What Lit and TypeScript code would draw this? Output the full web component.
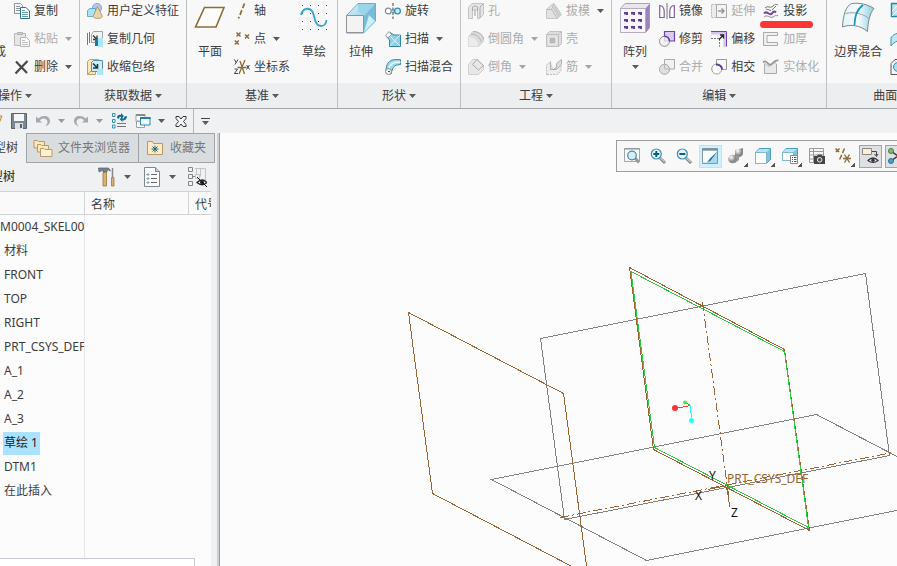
import { LitElement, html, svg, css, nothing, TemplateResult, SVGTemplateResult } from "lit";
import { customElement, property } from "lit/decorators.js";
import { classMap } from "lit/directives/class-map.js";

/* Small glyphs are drawn on a 16 x 16 grid. */
const glyphs: Record<string, SVGTemplateResult> = {
  copy: svg`<path d="M.5 .5h6l2 2v8h-8z" fill="#f4f4f4" stroke="#8d9499"/><path d="M2 3.5h4M2 5.5h4M2 7.5h4" stroke="#8d9499"/><path d="M6.500 4.500h5.500l3.500 3.500v7.500h-9z" fill="#fff" stroke="#2d7490"/><path d="M8 7.500h3M8 9.500h6M8 11.500h6M8 13.500h6" stroke="#6ba0b6"/>`,
  paste: svg`<path d="M.5 2.500h11v12h-11z" fill="#e6e6e6" stroke="#bbb"/><path d="M3.500 3.500v-2h5v2z" fill="#d5d5d5" stroke="#b0b0b0"/><path d="M6.500 6.500h6l3 3v6h-9z" fill="#fafafa" stroke="#b5b5b5"/><path d="M8 9.500h3M8 11.500h6M8 13.500h6" stroke="#bdbdbd"/>`,
  remove: svg`<path d="M2 2.500 13 14M13.500 2 1.500 14.500" fill="none" stroke="#484848" stroke-width="2.200"/>`,
  udf: svg`<circle cx="10" cy="5" r="4.600" fill="#b9c5ee" stroke="#7d8ab4" stroke-width=".7"/><path d="M.5 7.500 2.500 5.500h6v6l-2 2h-6z" fill="#a5e3f5" stroke="#4c9dbd" stroke-width=".8"/><path d="M10.500 3.500 6 13.500c1 2.500 8 2.500 9.500 0z" fill="#e9d5ad" stroke="#a98c57" stroke-width=".8"/>`,
  copygeom: svg`<path d="M.5 2v12M2.500 1v11" stroke="#777"/><path d="M4.500 3.500 6.500.500h9v7l-3 4h-8z" fill="#f0f2f3" stroke="#9ca2a5"/><path d="M6 4.500 9.500 8M10 4.500v4h-4" stroke="#333" stroke-width="1.300" fill="none"/><path d="M11 7h5v9h-5z" fill="#a9e8fb"/><path d="M8 8h3v7h-3z" fill="#177aa1"/>`,
  shrink: svg`<path d="M.5 15.500v-13l2-2h9v4M.5 15.500h8v-4h-4z" fill="#f7e7bb" stroke="#bda263"/><path d="M4.500 3.500 6.500 1.500h9v8l-3 3h-8z" fill="#d6ecf4" stroke="#4e93ad"/><path d="M6 4.500 10 8.500M10.500 5v4h-4.500" stroke="#153d4d" stroke-width="1.600" fill="none"/><path d="M10 10h6v6h-6z" fill="#a9e8fb"/>`,
  axis: svg`<path d="M10.500.500 4.500 15.500" stroke="#8b6c35" stroke-width="1.700" stroke-dasharray="5 2.200"/>`,
  point: svg`<path d="M2.500 1.500l4 4m0-4l-4 4M11 3.500l4 4m0-4l-4 4M.8 9.500l4 4m0-4l-4 4" stroke="#8b6c35" stroke-width="1.500" fill="none"/>`,
  csys: svg`<path d="M3.500 8.500h9M5 15l6-14M6 2l4.500 13" stroke="#8b6c35" stroke-width="1.300"/><path d="M.5.500l1.500 3M4 .5l-3 5M.5 10h3l-3 4.500h3.500M12.500 6l3 4.500m0-4.500l-3 4.500" stroke="#444" fill="none"/>`,
  revolve: svg`<path d="M5 5.500c2 1 4 1 6 0v5c-2-1-4-1-6 0z" fill="#9fdcf0"/><circle cx="3.300" cy="8" r="2.900" fill="#fff" stroke="#8a8a8a" stroke-width="1.200"/><circle cx="12.500" cy="8" r="2.900" fill="#c8eaf5" stroke="#318eb2" stroke-width="1.300"/><path d="M8 0v16" stroke="#444" stroke-dasharray="3 1.500"/>`,
  sweep: svg`<path d="M5 1.500 9 4h6.500v11.500h-11L4.500 9 1 5z" fill="#8ed0e7" stroke="#3587a6"/><path d="M5 5l5 5 5 5M15 4 5 15" fill="none" stroke="#d9f2fa"/><path d="M.7 4.500 4 .5l2.500 3L3 7z" fill="#f8f8f8" stroke="#888" stroke-width=".8"/>`,
  blend: svg`<path d="M1 12C1 5 4 1 9.500.600h6v5L12 6c-3 .5-4.500 3-6 9z" fill="#9ed9ee" stroke="#3d88a4"/><path d="M3.500 11c1-5 3-8 12-8" stroke="#e9f8fd" stroke-width="1.600" fill="none"/><circle cx="3.500" cy="12.500" r="3" fill="#f5f5f5" stroke="#888"/><path d="M3 12.500h2" stroke="#555"/>`,
  hole: svg`<path d="M.5 4.500 4 .500h11.500v11l-4 4h-2V8q-2.500-3.500-5 0v7.500h-4z" fill="#e5e5e5" stroke="#c4c4c4"/><path d="M4.500 8V4q2.500-2.500 5 0v4M12 15V4l3-3" stroke="#aaa" fill="none"/><path d="M6 13V7h2v6z" fill="#c8c8c8"/>`,
  round: svg`<path d="M.5 5.500 5 .5c6 0 10.500 4 10.500 8v2l-5 5h-10z" fill="#ddd" stroke="#cfcfcf"/><path d="M.5 5.500c6 0 10 3 10 10h-10z" fill="#ececec" stroke="#dcdcdc"/><path d="M5 .5c6 0 10.500 4 10.500 8M3 3c6 0 9.500 4 10 8" fill="none" stroke="#b2b2b2"/>`,
  chamfer: svg`<path d="M.5 5.500 5 .5h4l6.500 6v4l-5 5h-10z" fill="#e8e8e8" stroke="#cfcfcf"/><path d="M4.500 5.500l6 5.500M4.500 5.500 9 .5l6.500 6-5 4.500" fill="none" stroke="#aaa"/>`,
  draft: svg`<path d="M.5 6.500 4.500 2.500 8 .5l7.500 11-4 4h-11z" fill="#e2e2e2" stroke="#c6c6c6"/><path d="M.5 6.500h5l6 9M5.500 6.500 8 1" fill="none" stroke="#b8b8b8"/><path d="M9 2.500l6 9.500-3 2L7 6z" fill="#ccc"/>`,
  shell: svg`<path d="M.5 3.500 3.500.500h12v12l-3 3h-12z" fill="#dedede" stroke="#c0c0c0"/><path d="M.5 3.500h12v12M12.500 3.500l3-3" fill="none" stroke="#c0c0c0"/><path d="M3 6h7v7h-7z" fill="#b9b9b9" stroke="#f5f5f5"/>`,
  rib: svg`<path d="M.5 15.500V6L4.500 3v6l4 1.500L15 3v9l-4 3.500z" fill="#ededed" stroke="#bcbcbc" stroke-dasharray="2 1"/><path d="M4.500 2.500v8h6l5-5V.500l-5 4v4l-3 2" fill="#dcdcdc" stroke="#b0b0b0"/>`,
  mirror: svg`<path d="M.7 14.500V2.500q4.500.5 4.500 6v6z" fill="#fff" stroke="#7e5fa6" stroke-width="1.200"/><path d="M15.300 14.500V2.500q-4.500.5-4.500 6v6z" fill="#fff" stroke="#7e5fa6" stroke-width="1.200"/><path d="M8 0v16" stroke="#777"/>`,
  trim: svg`<path d="M5.500.5h10v9.500H5.500z" fill="#d9ccf2" stroke="#6b46a0" stroke-width="1.200"/><circle cx="5.500" cy="10.300" r="5" fill="#f2f2f2" fill-opacity=".8" stroke="#8f8f8f"/><path d="M5.500 5.300a5 5 0 0 1 5 5" fill="none" stroke="#5f3a94" stroke-width="1.500"/>`,
  merge: svg`<path d="M5.500.5h10v9.500H5.500z" fill="#f2f2f2" stroke="#aaa"/><circle cx="5.500" cy="10.300" r="5" fill="#e1e1e1" stroke="#a8a8a8"/><path d="M5.500 5.500V10h5" fill="none" stroke="#bbb"/>`,
  extend: svg`<path d="M.5 1.500h5v13h-5z" fill="#ececec" stroke="#b5b5b5" stroke-dasharray="2 1"/><path d="M5.500 1.500h10v13h-10z" fill="#f4f4f4" stroke="#a8a8a8"/><path d="M7 8h6M10.500 5.500 13 8l-2.500 2.500" fill="none" stroke="#999" stroke-width="1.500"/>`,
  offset: svg`<path d="M0 2h14v14" fill="none" stroke="#d4c4ec" stroke-width="3"/><path d="M0 .5h15.500v15" fill="none" stroke="#6d4a9b"/><path d="M0 7.500h8.500v8" fill="none" stroke="#777" stroke-dasharray="2 1"/><path d="M8 8.500l4-4M9 4h3.500v3.500" fill="none" stroke="#222" stroke-width="1.300"/>`,
  intersect: svg`<path d="M5.500.5h10v10H5.500z" fill="#f7f7f7" stroke="#999"/><circle cx="5.700" cy="10" r="5" fill="#fff" stroke="#999"/><path d="M5 5.500c3.500 0 6 2 6 5" fill="none" stroke="#5c3991" stroke-width="2"/>`,
  project: svg`<path d="M2 5c3-3 5 1 8-2 2-2 3-2 5-1M3 6l5 1.500M9 7l4-4" fill="none" stroke="#777"/><path d="M1 10.500c3-4 5 3 8 0 2-3 3-2 4-1" fill="none" stroke="#7442ab" stroke-width="2"/><path d="M1 14c3-3 6 1.500 9 0 2-2 3-1 5-1.500" fill="none" stroke="#888"/>`,
  thicken: svg`<path d="M.5 1.500h14v3H4v7h10.500v3H.5z" fill="#f0f0f0" stroke="#aaa"/>`,
  solidify: svg`<path d="M1.500 5v9.500h12V5c-3-4-5 3-8 2C4 6.500 3 4 1.500 5z" fill="#e9e9e9" stroke="#aaa"/><path d="M0 3.500c4-4 5 4 8 2 3-2 4-5 7.500-4" fill="none" stroke="#999" stroke-width="1.800"/>`,
  fill: svg`<path d="M1.500.5h14v13h-14z" fill="#b9e5f3" stroke="#2583a6" stroke-width="1.400"/><path d="M2 8l7-7M2 13 14 1" stroke="#fff"/>`,
  style: svg`<path d="M1 15V7c2-4 6-5 14-6v8c-6 0-10 1-14 6z" fill="#bde8f5" stroke="#3a93b3"/>`,
  freestyle: svg`<path d="M1 4.500 5 .5h10v11l-4 4h-10z" fill="none" stroke="#555"/><circle cx="8" cy="8" r="4.500" fill="#a5dff2" stroke="#318eb2"/>`,
  save: svg`<path d="M.5.5h15v15h-15z" fill="#7c878f" stroke="#59636b"/><path d="M3 1h10v7H3z" fill="#f4f6f7"/><path d="M4 10h8v6H4z" fill="#dce2e6"/><path d="M9 11h2v4H9z" fill="#59636b"/>`,
  open: svg`<path d="M1 13 8 3h7l-4 10z" fill="#f7dfae" stroke="#b98a36"/>`,
  undo: svg`<path d="M1 3.500v6h6L4.800 7.300C8 4 12.500 5.500 12.500 9c0 1.800-1 3-2.500 4.500 3.500-1 5-3 5-5.500C15 3 8 1 3.200 5.600z" fill="#a3a9ae"/>`,
  redo: svg`<path d="M15 3.500v6H9l2.200-2.200C8 4 3.500 5.500 3.500 9c0 1.800 1 3 2.500 4.500C2.500 12.500 1 10.500 1 8 1 3 8 1 12.800 5.600z" fill="#a3a9ae"/>`,
  regen: svg`<path d="M1.500.5h2.500v3H1.500zM1.500 6.500h2.500v3H1.500zM1.500 12h2.500v3H1.500z" fill="#eaf7fc" stroke="#3791b2"/><path d="M6 10.500h9M6 13.500h9" stroke="#777"/><path d="M6 5c0-3 2-4 4-3V0l3 3-3 2.500V4C8 3.500 8 5 8 6zM16 3c0 3-2 5-4.500 4.200V9l-3-3 3-2v1.500c1.500.5 2-1 2-2z" fill="#176f96"/>`,
  windows: svg`<path d="M1 1.500h9v7H1zM1.500 8h8v6.500h-8z" fill="#fff" stroke="#9aa1a6"/><path d="M1 2h9" stroke="#858c91" stroke-width="2"/><path d="M5.500 4.500h9.500v7.500H5.500z" fill="#f1fafe" stroke="#2c86ab"/><path d="M5 5h10.500" stroke="#1e7fa6" stroke-width="2"/>`,
  close: svg`<path d="M3 3.500h3l2 2.500 2-2.500h3v2L10.500 8.500 13 11.500v2h-3L8 11l-2 2.500H3v-2l2.500-3L3 5.500z" fill="#f5f5f5" stroke="#333"/>`,
  magnifier: svg`<path d="M.5.500h15v13H.5z" fill="#fafafa" stroke="#a2a6a9"/><path d="M0 1h16" stroke="#8a8f93"/><path d="M11 10l4 4.500" stroke="#999" stroke-width="3"/><circle cx="8" cy="7.500" r="4.300" fill="#d7eef7" stroke="#3f8eac" stroke-width="1.200"/>`,
  zoomin: svg`<path d="M10 10l5 5" stroke="#8a8a8a" stroke-width="3"/><path d="M10.500 10l4 4" stroke="#eee"/><circle cx="6.300" cy="6" r="5" fill="#e5f5fb" stroke="#3f8eac" stroke-width="1.200"/><path d="M3.300 6h6M6.300 3v6" stroke="#075f86" stroke-width="2"/>`,
  zoomout: svg`<path d="M10 10l5 5" stroke="#8a8a8a" stroke-width="3"/><path d="M10.500 10l4 4" stroke="#eee"/><circle cx="6.300" cy="6" r="5" fill="#e5f5fb" stroke="#3f8eac" stroke-width="1.200"/><path d="M3.300 6h6" stroke="#075f86" stroke-width="2"/>`,
  repaint: svg`<path d="M.5.5h15v15H.5z" fill="#a9d9ea" stroke="#87979f"/><path d="M1 3h14L5 14.500H1z" fill="#fbfdfe"/><path d="M0 1.500h16" stroke="#858f95" stroke-width="2"/><path d="M5 13c2 0 2-1 3-2.500L15 4 9 12c-1 1.500-3 2-4 1z" fill="#1b6e91"/>`,
  shading: svg`<defs><radialGradient id="ball" cx=".35" cy=".3"><stop offset="0" stop-color="#fff"/><stop offset="1" stop-color="#888"/></radialGradient></defs><path d="M7 2 15 0v6c-1 3-4 4-8 3z" fill="url(#ball)"/><path d="M4 7l7 1v4l-4 3z" fill="#999"/><circle cx="4.500" cy="11" r="4.300" fill="url(#ball)"/>`,
  cube: svg`<path d="M.5 4.500 4 .5h11.500v11l-4 4H.5z" fill="#7fc4dc" stroke="#4d9dbb"/><path d="M.5 4.500h11v11H.5z" fill="#fdfdfd" stroke="#7fb8cc"/><path d="M1 4 4 1h11l-3.500 3z" fill="#b5e4f3"/>`,
  views: svg`<path d="M.5 4.500 4 .5h11.500v9l-4 3H.5z" fill="#7fc4dc" stroke="#4d9dbb"/><path d="M.5 4.500h11v8H.5z" fill="#fdfdfd" stroke="#7fb8cc"/><path d="M1 4 4 1h11l-3.500 3z" fill="#b5e4f3"/><path d="M8.500 7.500h7v8h-7z" fill="#fff" stroke="#888"/><path d="M10 9.500h1M12 9.500h2.500M10 11.500h1M12 11.500h2.500M10 13.500h1M12 13.500h2.500" stroke="#555"/>`,
  camera: svg`<path d="M.5.500h14v14H.5zM4.500.500v14M.5 3.500h14M.5 7h14M.5 11h14" fill="#fafafa" stroke="#999"/><path d="M5 8h3l1-1.500h3.500l1 1.500H16v8H5z" fill="#444"/><circle cx="10.700" cy="11.800" r="2.300" fill="#555" stroke="#eee"/>`,
  datum: svg`<path d="M.5.500l4 4m0-4l-4 4M9.500 .5 4 13" stroke="#8b6c35" stroke-width="1.500" stroke-dasharray="5 2"/><path d="M8 10.500h8M9.500 6.500l5 8M14.500 6.500l-5 8" stroke="#8b6c35" stroke-width="1.400"/>`,
  annot: svg`<path d="M.5.500h9v6h-9z" fill="#fdf0d2" stroke="#888"/><path d="M10 3.500h4.500v4M12.500 6l2 2.500L16 6" fill="none" stroke="#444"/><path d="M6 12.500q5-5 10 0-5 4-10 0z" fill="#eee" stroke="#333" stroke-width="1.200"/><circle cx="11" cy="12.300" r="1.800" fill="#333"/>`,
  spin: svg`<path d="M3 3l7 5-7 5" fill="none" stroke="#333" stroke-width="1.400"/><circle cx="3" cy="3" r="2.500" fill="#7cbf70" stroke="#3e7f39"/><circle cx="3" cy="13" r="2.500" fill="#4ba3c7" stroke="#28708e"/><circle cx="11" cy="8" r="2.500" fill="#d9534f"/>`,
  folders: svg`<path d="M-1 8V.5h3.500l1 1h6V8z" fill="#fbe7bd" stroke="#b99a60"/><path d="M2.500 12V4.500h3.500l1 1h6.500V12z" fill="#fbe7bd" stroke="#b99a60"/><path d="M5.500 16.500v-8h3.500l1 1h7v7z" fill="#fff2d4" stroke="#b99a60"/>`,
  favorite: svg`<path d="M.5 14.500v-13h5l1 2h9v11z" fill="#fdebc5" stroke="#b99a60"/><path d="M8 5.500v7M4.500 9h7M5.500 6.500l5 5M10.500 6.500l-5 5" stroke="#1d6784"/>`,
};

/* Larger ribbon glyphs are drawn on a 30 x 30 grid. */
const largeGlyphs: Record<string, SVGTemplateResult> = {
  regenerate: svg`<path d="M8 6h14v18H8z" fill="#e8f5fa" stroke="#3a93b3"/>`,
  plane: svg`<path d="M9.500 4.500h19.500l-8 19.500H.5z" fill="#fcfcfb" stroke="#8b6c35" stroke-width="1.600"/>`,
  sketch: svg`<path d="M3 2.500h1M11 2.500h1M19 2.500h1M27 2.500h1M3 10.500h1M11 10.500h1M19 10.500h1M27 10.500h1M3 18.500h1M11 18.500h1M19 18.500h1M27 18.500h1M3 26.500h1M11 26.500h1M19 26.500h1M27 26.500h1" stroke="#444"/><path d="M2 12c2-8 11-9 13 1 1 6 3 10 7 10 3 0 5-2 5.500-6" fill="none" stroke="#36a3d1" stroke-width="1.800"/>`,
  extrude: svg`<defs><linearGradient id="ext" x2="1" y2="1"><stop stop-color="#dff5fc"/><stop offset="1" stop-color="#65b5d2"/></linearGradient></defs><path d="M.5 12.500 12 .5h17.500v17.500l-12 12H.5z" fill="url(#ext)" stroke="#5fb2cf"/><path d="M12 1v7L18 13 29 1" fill="#9bd5e9"/><path d="M18 13 29 1v17L18 29z" fill="#78bdd7"/><path d="M18 29 29 18l-6-6z" fill="#c9f0fb"/><path d="M.5 12.500h17v17H.5z" fill="#f3f3f3" stroke="#929292"/>`,
  pattern: svg`<path d="M.5 5.500 5 .5h24.500v24l-4 5H.5z" fill="#e9e6ef" stroke="#a9a4b2"/><path d="M25.500 5.500l4-4.500v24l-4 4.500z" fill="#9a84bd"/><path d="M.5 5.500h25v24H.5z" fill="#f8f6fb" stroke="#b3aebd"/>${[9, 16, 23].map((y) => [4, 11, 18].map((x) => svg`<path d="M${x} ${y}h4v3h-4z" fill="#5d3f93"/><path d="M${x} ${y + 2}h2v1h-2z" fill="#bda9de"/>`))}`,
  boundary: svg`<defs><linearGradient id="bnd" x2="1"><stop stop-color="#e4f3f8"/><stop offset=".5" stop-color="#f6fcfe"/><stop offset="1" stop-color="#8dcfe6"/></linearGradient></defs><path d="M-.5 24C0 12 3 3 8.500.5c9-1 16 1 22.500 5C27 10 25 18 24.500 28.500 17 22 7 21-.5 24z" fill="url(#bnd)" stroke="#7a858a"/><path d="M2.500 10.500c9-2 17 0 23.500 5" fill="none" stroke="#99a5aa"/><path d="M20 2C13 7 12 14 11.500 22" fill="none" stroke="#1b94bf" stroke-width="1.700"/>`,
};

const arrow = html`<svg class="arrow" viewBox="0 0 7 4" aria-hidden="true"><path d="M0 0h7L3.500 4z" fill="currentColor"/></svg>`;
const glyph = (name: string) => html`<svg class="glyph" viewBox="0 0 16 16" aria-hidden="true">${glyphs[name]}</svg>`;

type Cmd = { icon: string; label: string; menu?: boolean | "on"; off?: boolean; marked?: boolean };
type Part = { large: string; label: string; menu?: boolean } | Cmd[];

const groups: { title: string; parts: Part[] }[] = [
  { title: "操作", parts: [
    { large: "regenerate", label: "重新生成" },
    [{ icon: "copy", label: "复制" }, { icon: "paste", label: "粘贴", menu: true, off: true }, { icon: "remove", label: "删除", menu: true }],
  ] },
  { title: "获取数据", parts: [
    [{ icon: "udf", label: "用户定义特征" }, { icon: "copygeom", label: "复制几何" }, { icon: "shrink", label: "收缩包络" }],
  ] },
  { title: "基准", parts: [
    { large: "plane", label: "平面" },
    [{ icon: "axis", label: "轴" }, { icon: "point", label: "点", menu: true }, { icon: "csys", label: "坐标系" }],
    { large: "sketch", label: "草绘" },
  ] },
  { title: "形状", parts: [
    { large: "extrude", label: "拉伸" },
    [{ icon: "revolve", label: "旋转" }, { icon: "sweep", label: "扫描", menu: true }, { icon: "blend", label: "扫描混合" }],
  ] },
  { title: "工程", parts: [
    [{ icon: "hole", label: "孔", off: true }, { icon: "round", label: "倒圆角", menu: true, off: true }, { icon: "chamfer", label: "倒角", menu: true, off: true }],
    [{ icon: "draft", label: "拔模", menu: "on", off: true }, { icon: "shell", label: "壳", off: true }, { icon: "rib", label: "筋", menu: true, off: true }],
  ] },
  { title: "编辑", parts: [
    { large: "pattern", label: "阵列", menu: true },
    [{ icon: "mirror", label: "镜像" }, { icon: "trim", label: "修剪" }, { icon: "merge", label: "合并", off: true }],
    [{ icon: "extend", label: "延伸", off: true }, { icon: "offset", label: "偏移" }, { icon: "intersect", label: "相交" }],
    [{ icon: "project", label: "投影", marked: true }, { icon: "thicken", label: "加厚", off: true }, { icon: "solidify", label: "实体化", off: true }],
  ] },
  { title: "曲面", parts: [
    { large: "boundary", label: "边界混合" },
    [{ icon: "fill", label: "填充" }, { icon: "style", label: "样式" }, { icon: "freestyle", label: "自由式" }],
  ] },
];

const shared = css`
  * { box-sizing: border-box; }
  :host { font: 12px/16px "Noto Sans", "Noto Sans CJK SC", sans-serif; color: #3c3c3c; }
  button { font: inherit; color: inherit; background: none; border: 0; padding: 0; margin: 0; white-space: nowrap; }
  .glyph { width: 16px; height: 16px; flex: none; display: block; overflow: visible; }
  .arrow { width: 7px; height: 4px; flex: none; display: block; color: #5a5a5a; }
`;

@customElement("cad-ribbon")
export class CadRibbon extends LitElement {
  static styles = [shared, css`
    :host { display: block; overflow: hidden; border-bottom: 1px solid #a3a6a9; background: #f8f8f8; }
    /* The bar is scrolled so that the first group is partly out of view. */
    .bar { display: flex; margin-left: -49px; }
    .group { flex: none; border-right: 1px solid #bfc2c5; }
    .body { display: flex; gap: 8px; height: 83px; padding: 0 7px; overflow: hidden; }
    .foot { display: flex; align-items: center; justify-content: center; gap: 3px; width: 100%; height: 25px; background: #eceef0; }
    .large { display: flex; flex-direction: column; align-items: center; min-width: 32px; padding-top: 3px; }
    .big { width: 30px; height: 30px; flex: none; overflow: visible; }
    .caption { margin: 11px 0 5px; }
    .column { display: flex; flex-direction: column; align-items: flex-start; justify-content: flex-end; padding-bottom: 2px; }
    .cmd { display: flex; align-items: center; gap: 4px; height: 28px; flex: none; position: relative; }
    .cmd .arrow { margin-left: 3px; }
    .off { color: #adadad; }
    .off .arrow { color: #a5a5a5; }
    .on .arrow { color: #5a5a5a; }
    .marked::after { content: ""; position: absolute; left: -3px; right: -6px; bottom: -3px; height: 7px; border-radius: 4px; background: #fb3434; }
  `];

  private part(p: Part): TemplateResult {
    if (!Array.isArray(p)) {
      return html`<button class="large"><svg class="big" viewBox="0 0 30 30" aria-hidden="true">${largeGlyphs[p.large]}</svg><span class="caption">${p.label}</span>${p.menu ? arrow : nothing}</button>`;
    }
    return html`<div class="column">${p.map((c) => html`
      <button class=${classMap({ cmd: true, off: !!c.off, on: c.menu === "on", marked: !!c.marked })} ?disabled=${!!c.off}>
        ${glyph(c.icon)}<span>${c.label}</span>${c.menu ? arrow : nothing}
      </button>`)}</div>`;
  }

  render() {
    return html`<div class="bar">${groups.map((g) => html`
      <section class="group">
        <div class="body">${g.parts.map((p) => this.part(p))}</div>
        <button class="foot"><span>${g.title}</span>${arrow}</button>
      </section>`)}</div>`;
  }
}

@customElement("cad-quick-bar")
export class CadQuickBar extends LitElement {
  static styles = [shared, css`
    :host { display: flex; align-items: center; height: 24px; background: #eff1f3; overflow: hidden; }
    .tools { display: flex; align-items: center; gap: 8px; margin-left: -13px; height: 24px; padding-right: 4px; border-right: 1px solid #b4b7ba; }
    .tool { display: flex; align-items: center; gap: 7px; }
    .dim .arrow { color: #999; }
    .more { display: flex; flex-direction: column; align-items: center; margin-left: 7px; border-top: 1px solid #444; padding: 2px 1px 0; }
  `];

  render() {
    const tool = (icon: string, label: string, menu = false, dim = false) => html`
      <button class=${classMap({ tool: true, dim })} aria-label=${label}>${glyph(icon)}${menu ? arrow : nothing}</button>`;
    return html`<div class="tools">
        ${tool("open", "打开")}${tool("save", "保存")}${tool("undo", "撤消", true, true)}${tool("redo", "重做", true, true)}
        ${tool("regen", "重新生成")}${tool("windows", "窗口", true)}${tool("close", "关闭")}
      </div><button class="more" aria-label="自定义">${arrow}</button>`;
  }
}

const rows = ["材料", "FRONT", "TOP", "RIGHT", "PRT_CSYS_DEF", "A_1", "A_2", "A_3", "草绘 1", "DTM1", "在此插入"];

@customElement("cad-tree")
export class CadTree extends LitElement {
  @property() selected = "草绘 1";

  static styles = [shared, css`
    :host { display: flex; flex-direction: column; background: #eff1f3; border-right: 1px solid #999c9f; box-shadow: inset -2px 0 #cdd0d2; padding-right: 3px; overflow: hidden; }
    .tabs { display: flex; height: 30px; }
    .tab { flex: none; display: flex; align-items: center; gap: 6px; padding: 0 8px 0 7px; border: solid #a2a5a8; border-width: 1px 1px 1px 0; background: #dadddf; color: #73777b; }
    .tab .glyph { width: 18px; }
    .current { width: 27px; padding: 0 8px 0 0; justify-content: flex-end; border-width: 0 1px 0 0; background: none; color: #3c3c3c; }
    .head { display: flex; align-items: center; height: 28px; padding-right: 9px; overflow: hidden; }
    .title { width: 15px; display: flex; justify-content: flex-end; white-space: nowrap; font-weight: 500; }
    .tools { margin-left: auto; display: flex; align-items: center; gap: 11px; }
    .tool { display: flex; align-items: center; gap: 7px; }
    .ico { width: 20px; height: 20px; }
    .area { flex: 1; margin-right: 5px; background: #fcfcfd; display: flex; flex-direction: column; overflow: hidden; }
    table { flex: 1; width: 100%; height: 100%; border-collapse: separate; border-spacing: 0; table-layout: fixed; }
    .wide { width: 85px; }
    .mid { width: 104px; }
    th { height: 24px; padding: 3px 0 0 6px; border: solid #d0d3d6; border-width: 1px 1px 1px 0; font-weight: 400; text-align: left; background: #fafafa; overflow: hidden; white-space: nowrap; }
    td { height: 24px; padding: 0; overflow: hidden; white-space: nowrap; }
    td:first-child { padding-left: 3px; border-right: 1px solid #e4e6eb; }
    th:last-child { border-right: 0; }
    .rest td { height: auto; }
    .root { display: flex; width: 84px; margin: 0 -3px; }
    .name { display: inline-block; padding: 3px 1px 4px; }
    .picked { background: #abe2ff; padding-right: 2px; color: #1c1c1c; }
    .note { width: 195px; height: 8px; border: solid #c9ccd4; border-width: 1px 1px 0 0; background: #fff; }
  `];

  render() {
    return html`
      <div class="tabs" role="tablist">
        <button class="tab current" role="tab" aria-selected="true">型树</button>
        <button class="tab" role="tab">${glyph("folders")}文件夹浏览器</button>
        <button class="tab" role="tab">${glyph("favorite")}收藏夹</button>
      </div>
      <div class="head">
        <span class="title">型树</span>
        <div class="tools">
          <button class="tool" aria-label="设置"><svg class="ico" viewBox="0 0 20 20"><path d="M1.500 1h10l2 3-2-1H10v2H6V3L2 5z" fill="#78838b" stroke="#535d64" stroke-width=".7"/><path d="M6 5.500h3.500V19H6z" fill="#d9b277" stroke="#94692b" stroke-width=".7"/><path d="M15.500 1v9" stroke="#888" stroke-width="1.500"/><path d="M14.500 10.500h2.500V19h-2.500z" fill="#d9b277" stroke="#94692b" stroke-width=".7"/></svg>${arrow}</button>
          <button class="tool" aria-label="显示"><svg class="ico" viewBox="0 0 20 20"><path d="M2.500.5h11l4 4v15h-15z" fill="#fcfdfd" stroke="#7f898f"/><path d="M13.500.5v4h4" fill="#cfd6da" stroke="#7f898f"/><path d="M5 7h2v1H5zM5 11h2v1H5zM5 15h2v1H5z" stroke="#7b9aa7" fill="none"/><path d="M9 7.500h6M9 11.500h6M9 15.500h6" stroke="#666"/></svg>${arrow}</button>
          <button class="tool" aria-label="可见性"><svg class="ico" viewBox="0 0 20 20"><path d="M1.500.5h4v4h-4zM1.500 7.500h4v4h-4zM1.500 14.500h4v4h-4zM5.500 9.500h3" fill="none" stroke="#858585"/><path d="M8 1.500h10.500v12M13.500 1.500v8M9.500 1.500v6M8.500 7.500h4v4h-4z" fill="none" stroke="#c3c6c9"/><path d="M10 15.500q5-5 10 0-5 4.500-10 0z" fill="#eee" stroke="#222" stroke-width="1.200"/><circle cx="15" cy="15.300" r="2" fill="#222"/><path d="M10 10 20 20" stroke="#111"/></svg></button>
        </div>
      </div>
      <div class="area">
        <table>
          <colgroup><col class="wide"><col class="mid"><col></colgroup>
          <thead><tr><th></th><th>名称</th><th>代号</th></tr></thead>
          <tbody>
            <tr><td><span class="root">M0004_SKEL00</span></td><td></td><td></td></tr>
            ${rows.map((r) => html`<tr><td><span class=${classMap({ name: true, picked: r === this.selected })}>${r}</span></td><td></td><td></td></tr>`)}
            <tr class="rest"><td></td><td></td><td></td></tr>
          </tbody>
        </table>
        <div class="note"></div>
      </div>`;
  }
}

@customElement("cad-view")
export class CadView extends LitElement {
  static styles = [shared, css`
    :host { display: block; position: relative; background: #fcfcfc; overflow: hidden; }
    .scene { display: block; width: 100%; height: 100%; }
    .line { fill: none; stroke: #808080; shape-rendering: crispEdges; }
    .brown { stroke: #996633; }
    .green { stroke: #2ecc40; }
    .red { stroke: #ff3333; }
    .cyan { stroke: #22ffff; }
    .dash { stroke-dasharray: 9 3 2 3; }
    .tag { font-size: 12px; fill: #996633; }
    .letter { font-size: 12px; fill: #111; }
    .tools { position: absolute; top: 7px; left: 396px; right: 0; display: flex; align-items: center; gap: 3px; height: 32px; padding-left: 4px; border: solid #9b9b9b; border-width: 1px 0 1px 1px; background: #f8f8f8; overflow: hidden; }
    .tool { flex: none; display: flex; align-items: center; padding-left: 2px; width: 23px; height: 23px; border: 1px solid transparent; position: relative; }
    .fly { width: 24px; }
    .fly::after { content: ""; position: absolute; right: 0; bottom: 0; width: 4px; height: 4px; background: linear-gradient(135deg, transparent 50%, #555 50%); }
    .lit { background: #cdf1ff; border-color: #b5e6fa; }
    .down { background: #dfe0e3; border-color: #a3a4a8; }
  `];

  render() {
    const tools: [string, string, string][] = [
      ["magnifier", "重新调整", ""], ["zoomin", "放大", ""], ["zoomout", "缩小", ""], ["repaint", "重画", "lit"], ["shading", "显示样式", "fly"],
      ["cube", "已保存方向", "fly"], ["views", "视图管理器", "fly"], ["camera", "捕获", ""], ["datum", "基准显示", "fly"], ["annot", "注释显示", "down"], ["spin", "旋转中心", "down"],
    ];
    return html`
      <svg class="scene" viewBox="220 133 677 433" preserveAspectRatio="xMinYMin meet">
        <path class="line" d="M540.500 338.500 865.500 273.500 889.500 455.500 564.500 519.500z"/>
        <path class="line" d="M897 456.500 816.500 414.500 491.500 479.500 646.500 560.500 897 510.500"/>
        <path class="line brown" d="M571 566 432.500 493.500 408.500 312.500 563.500 393.500 586.500 566"/>
        <path class="line brown dash" d="M560 517.500 893 452.500"/>
        <path class="line brown dash" d="M702.500 302 727.500 488"/>
        <path class="line brown" d="M629.500 267.500 784.500 349.500 809.500 530.500 653.500 449.500z"/>
        <path class="line green" d="M631 271.500 784.500 351.500 808.500 527.500 654.500 447.500z"/>
        <path class="line brown" d="M708 489.500 727.500 485.500 729.500 507M726.500 487 729 500"/>
        <path class="line red" d="M690.500 405.500 675 408.500"/>
        <path class="line green" d="M690.500 405.500 685 402.500"/>
        <path class="line cyan" d="M690.500 405.500 691.500 420"/>
        <circle cx="675" cy="408" r="3" fill="#f33"/><circle cx="685" cy="402.500" r="2" fill="#4e4"/><circle cx="691.500" cy="420.500" r="2.500" fill="#2ff"/>
        <text class="tag" x="727" y="483">PRT_CSYS_DEF</text>
        <text class="letter" x="709" y="480">Y</text><text class="letter" x="695" y="500">X</text><text class="letter" x="731" y="517">Z</text>
      </svg>
      <div class="tools" role="toolbar">${tools.map(([icon, label, kind]) => html`<button class="tool ${kind}" aria-label=${label}>${glyph(icon)}</button>`)}</div>`;
  }
}

@customElement("app-root")
export class AppRoot extends LitElement {
  static styles = css`
    :host { display: flex; flex-direction: column; height: 100vh; overflow: hidden; background: #fcfcfc; }
    .work { flex: 1; min-height: 0; display: grid; grid-template-columns: 220px 1fr; }
  `;

  render() {
    return html`<cad-ribbon></cad-ribbon><cad-quick-bar></cad-quick-bar>
      <div class="work"><cad-tree></cad-tree><cad-view></cad-view></div>`;
  }
}
